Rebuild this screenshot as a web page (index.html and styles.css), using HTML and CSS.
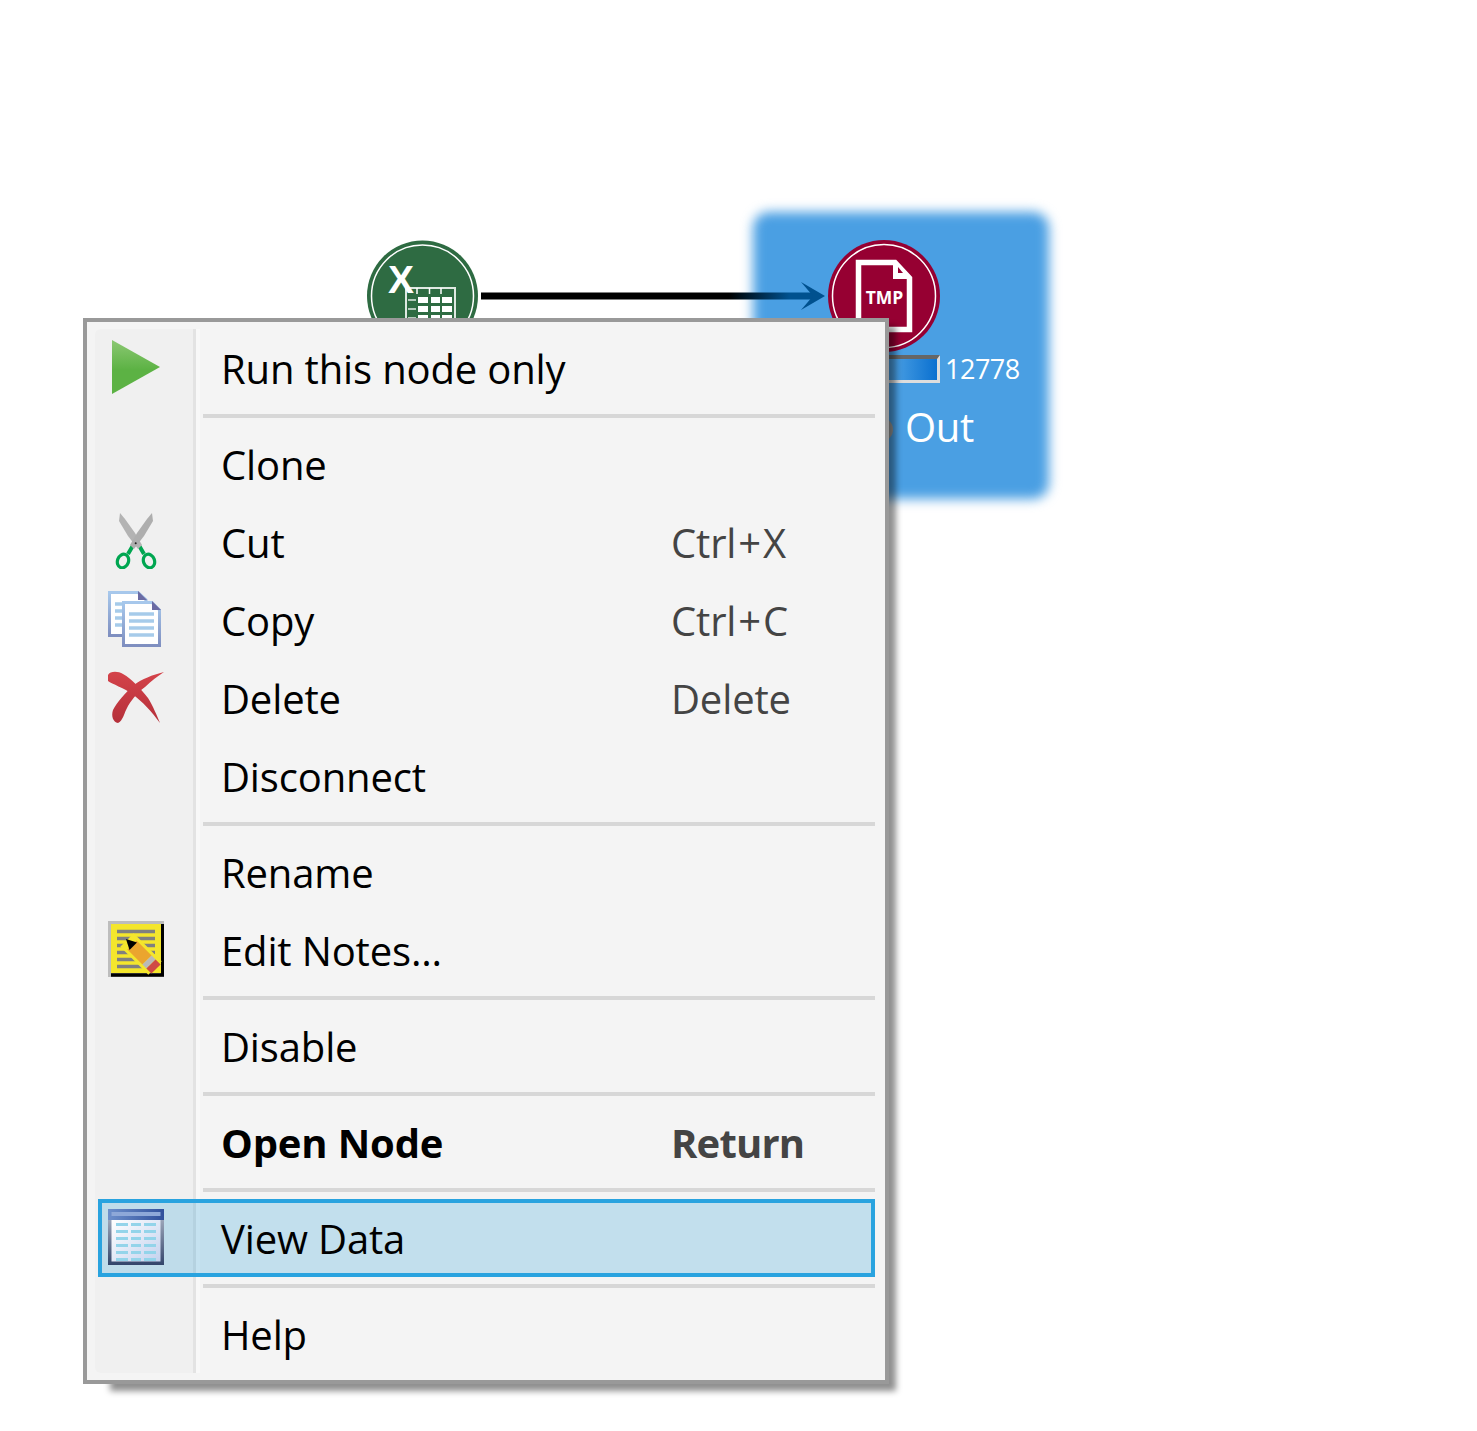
FILE: index.html
```html
<!DOCTYPE html>
<html lang="en">
<head>
<meta charset="utf-8">
<title>Node context menu</title>
<link rel="stylesheet" href="styles.css">
</head>
<body>
<main class="canvas">
  <div class="selection"></div>
  <svg class="arrow" width="350" height="40" viewBox="0 0 350 40">
    <defs>
      <linearGradient id="wire" x1="0" x2="1" y1="0" y2="0">
        <stop offset="0.74" stop-color="#000"/>
        <stop offset="0.92" stop-color="#00518f"/>
      </linearGradient>
    </defs>
    <rect x="1" y="12.500" width="335" height="7" fill="url(#wire)"/>
    <path d="M321 2 L345 16 L321 30 L333 16 Z" fill="#00518f"/>
  </svg>
  <svg class="node node-excel" width="114" height="114" viewBox="0 0 114 114">
    <circle cx="57.500" cy="57" r="55.500" fill="#2e6b42"/>
    <circle cx="57.500" cy="57" r="51" fill="none" stroke="#fff" stroke-width="1.500"/>
    <rect x="41" y="49" width="49" height="60" fill="#2e6b42" stroke="#dfe9e2" stroke-width="2"/>
    <path d="M53 58h10v6H53zM66 58h9v6h-9zM77 58h10v6H77zM53 67h10v6H53zM66 67h9v6h-9zM77 67h10v6H77zM53 76h10v6H53zM66 76h9v6h-9zM77 76h10v6H77z" fill="#fff"/>
    <path d="M43 61h8M43 70h8M43 79h8" stroke="#dfe9e2" stroke-width="1.500"/>
    <path d="M64.500 49v6M76 49v6M52 49v6" stroke="#fff" stroke-width="1.500"/>
    <text class="excel-x" x="23" y="54">X</text>
  </svg>
  <svg class="node node-tmp" width="114" height="114" viewBox="0 0 114 114">
    <circle cx="57" cy="57" r="56" fill="#960032"/>
    <circle cx="57" cy="57" r="51.500" fill="none" stroke="#fff" stroke-width="1.500"/>
    <path d="M31.500 23.500H68L82.500 39V90.500H31.500Z" fill="none" stroke="#fff" stroke-width="5.500"/>
    <path d="M66 21L85 40H66Z" fill="#fff"/>
    <path d="M71 28L76 34H71Z" fill="#960032"/>
    <text class="tmp-label" x="57.500" y="65" text-anchor="middle">TMP</text>
  </svg>
  <div class="progress"><div class="progress-fill"></div></div>
  <span class="count">12778</span>
  <span class="peek"></span>
  <span class="node-name">Out</span>

  <div class="menu-shadow"></div>
  <nav class="menu">
    <div class="row">
      <svg class="icon" viewBox="0 0 56 56">
        <defs><linearGradient id="play" x1="0" x2="0" y1="0" y2="1"><stop offset="0" stop-color="#8cc873"/><stop offset="0.55" stop-color="#5cb244"/></linearGradient></defs>
        <path d="M4 1L52 28L4 55Z" fill="url(#play)"/>
      </svg>
      <span class="label">Run this node only</span>
    </div>
    <div class="sep"></div>
    <div class="row"><span class="icon"></span><span class="label">Clone</span></div>
    <div class="row">
      <svg class="icon" viewBox="0 0 56 56">
        <path d="M27 29L20 41M29 29L36 41" stroke="#00a651" stroke-width="4" fill="none"/>
        <ellipse cx="15" cy="48" rx="5.500" ry="7" transform="rotate(20 15 48)" fill="none" stroke="#00a651" stroke-width="3.200"/>
        <ellipse cx="41" cy="48" rx="5.500" ry="7" transform="rotate(-20 41 48)" fill="none" stroke="#00a651" stroke-width="3.200"/>
        <path d="M12 0L17 6L27 20L34 32L30 36L20 23L11 8Z" fill="#b3b3b3"/>
        <path d="M44 0L39 6L29 20L22 32L26 36L36 23L45 8Z" fill="#aeaeae"/>
        <circle cx="27.700" cy="30.300" r="1" fill="#222"/>
      </svg>
      <span class="label">Cut</span><span class="shortcut">Ctrl<span class="plus">+</span>X</span>
    </div>
    <div class="row">
      <svg class="icon" viewBox="0 0 56 56">
        <defs><linearGradient id="page" x1="0" x2="0" y1="0" y2="1"><stop offset="0" stop-color="#a7c8ec"/><stop offset="1" stop-color="#7f8fc0"/></linearGradient></defs>
        <path d="M1.500 1.500H30L38 9V44.500H1.500Z" fill="#fff" stroke="url(#page)" stroke-width="3"/>
        <path d="M30 0L39 9H30Z" fill="#6b6ba3"/>
        <path d="M7 13H16M7 20H16M7 27H16M7 34H16" stroke="#a6cbea" stroke-width="3.500"/>
        <path d="M15.500 11.500H44L51.500 19V54.500H15.500Z" fill="#fff" stroke="url(#page)" stroke-width="3"/>
        <path d="M44 10L53 19H44Z" fill="#6b6ba3"/>
        <path d="M21 23H46M21 30H46M21 37H46M21 44H46" stroke="#a6cbea" stroke-width="3.500"/>
      </svg>
      <span class="label">Copy</span><span class="shortcut">Ctrl<span class="plus">+</span>C</span>
    </div>
    <div class="row">
      <svg class="icon" viewBox="0 0 56 56">
        <defs><linearGradient id="cross" x1="0" x2="0" y1="0" y2="1"><stop offset="0" stop-color="#d4434a"/><stop offset="1" stop-color="#b5303a"/></linearGradient></defs>
        <path d="M0 6C2 2 10 2 15 5C24 10 32 19 40 29C45 37 49 47 52 54C44 43 34 32 24 25C16 19 4 15 0 12Z" fill="url(#cross)"/>
        <path d="M56 3C44 6 34 10 26 16C18 23 9 33 5 41C3 47 5 53 10 54C15 52 16 44 20 37C25 29 31 22 37 18C43 12 50 7 56 3Z" fill="url(#cross)"/>
      </svg>
      <span class="label">Delete</span><span class="shortcut">Delete</span>
    </div>
    <div class="row"><span class="icon"></span><span class="label">Disconnect</span></div>
    <div class="sep"></div>
    <div class="row"><span class="icon"></span><span class="label">Rename</span></div>
    <div class="row">
      <svg class="icon" viewBox="0 0 56 56">
        <rect width="56" height="56" fill="#bdbdbd"/>
        <path d="M3 54H54.500V3" fill="none" stroke="#000" stroke-width="3.500"/>
        <rect x="3" y="3" width="50" height="49" fill="#f4e62c"/>
        <path d="M9 10.500H47M9 17.500H47M9 24.500H47M9 31.500H47M9 38.500H47M9 45.500H47" stroke="#808080" stroke-width="3.500"/>
        <path d="M19 19L47 47" stroke="#f4e62c" stroke-width="19"/>
        <path d="M24 24L39 39" stroke="#eba52e" stroke-width="13"/>
        <path d="M39 39L43 43" stroke="#b9b9b9" stroke-width="13"/>
        <path d="M43 43L48 48" stroke="#cf4a45" stroke-width="13"/>
        <path d="M18 18L29 21.500L21.500 29Z" fill="#000"/>
      </svg>
      <span class="label">Edit Notes...</span>
    </div>
    <div class="sep"></div>
    <div class="row"><span class="icon"></span><span class="label">Disable</span></div>
    <div class="sep"></div>
    <div class="row row-bold"><span class="icon"></span><span class="label">Open Node</span><span class="shortcut">Return</span></div>
    <div class="sep"></div>
    <div class="row row-active">
      <svg class="icon" viewBox="0 0 56 56">
        <defs>
          <linearGradient id="tframe" x1="0" x2="0" y1="0" y2="1"><stop offset="0" stop-color="#b4bccb"/><stop offset="1" stop-color="#33456b"/></linearGradient>
          <linearGradient id="thead" x1="0" x2="1" y1="0" y2="0"><stop offset="0" stop-color="#6d8fcb"/><stop offset="1" stop-color="#30509c"/></linearGradient>
          <linearGradient id="tbody" x1="0" x2="1" y1="0" y2="1"><stop offset="0" stop-color="#fff"/><stop offset="1" stop-color="#c4d2ee"/></linearGradient>
        </defs>
        <rect width="56" height="56" fill="url(#tframe)"/>
        <rect width="56" height="11" fill="url(#thead)"/>
        <rect x="3.500" y="3" width="49" height="4" fill="#8ea8d8"/>
        <rect x="3.500" y="11" width="49" height="41.500" fill="url(#tbody)"/>
        <path d="M8 15.500H20M23 15.500H33M36 15.500H48M8 22.500H20M23 22.500H33M36 22.500H48M8 29.500H20M23 29.500H33M36 29.500H48M8 36.500H20M23 36.500H33M36 36.500H48M8 43.500H20M23 43.500H33M36 43.500H48M8 50.500H20M23 50.500H33M36 50.500H48" stroke="#93d4ea" stroke-width="3"/>
      </svg>
      <span class="label">View Data</span>
    </div>
    <div class="sep"></div>
    <div class="row"><span class="icon"></span><span class="label">Help</span></div>
  </nav>
</main>
</body>
</html>
```
FILE: styles.css
```css
html, body {
  margin: 0;
  background: #fff;
}
.canvas {
  position: relative;
  width: 1477px;
  height: 1431px;
  overflow: hidden;
  font-family: "Open Sans", "Noto Sans", sans-serif;
}
.selection {
  position: absolute;
  left: 753px;
  top: 212px;
  width: 296px;
  height: 287px;
  border-radius: 16px;
  background: #4a9fe3;
  filter: blur(6px);
}
.arrow {
  position: absolute;
  left: 480px;
  top: 280px;
}
.node {
  position: absolute;
  top: 239px;
}
.node-excel { left: 365px; }
.node-tmp { left: 827px; }
.excel-x {
  font-family: "Liberation Sans", sans-serif;
  font-weight: 700;
  font-size: 39px;
  fill: #fff;
}
.tmp-label {
  font-family: "Open Sans", sans-serif;
  font-weight: 700;
  font-size: 17.500px;
  fill: #fff;
}
.progress {
  position: absolute;
  left: 800px;
  top: 355px;
  width: 140px;
  height: 28px;
  box-sizing: border-box;
  border: 3px solid #ddd;
  border-top: 4px solid #666;
  border-left: 0;
}
.progress-fill {
  height: 100%;
  background: linear-gradient(90deg, #4a9fe3 68%, #0a70d0 100%);
}
.count {
  position: absolute;
  left: 945px;
  top: 350px;
  font-size: 27px;
  line-height: 38px;
  letter-spacing: -0.5px;
  color: #fff;
}
.peek {
  position: absolute;
  left: 868px;
  top: 417px;
  width: 25px;
  height: 25px;
  border-radius: 50%;
  background: #9a9a9a;
}
.node-name {
  position: absolute;
  left: 905px;
  top: 399px;
  font-size: 40px;
  line-height: 56px;
  letter-spacing: -0.3px;
  color: #fff;
}
.menu-shadow {
  position: absolute;
  left: 110px;
  top: 326px;
  width: 786px;
  height: 1065px;
  background: rgba(0, 0, 0, 0.44);
  filter: blur(3px);
}
.menu {
  position: absolute;
  left: 83px;
  top: 318px;
  width: 806px;
  height: 1066px;
  box-sizing: border-box;
  padding: 7px 10px 7px 11px;
  border: 4px solid #999;
  background: #f4f4f4;
}
.menu::before {
  content: "";
  position: absolute;
  left: 8px;
  top: 7px;
  bottom: 7px;
  width: 98px;
  box-sizing: content-box;
  border-radius: 6px 0 0 6px;
  background: #f0f0f0;
  border-right: 3px solid #e3e3e3;
  box-shadow: 4px 0 0 #f8f8f8;
}
.row {
  position: relative;
  display: flex;
  height: 78px;
  box-sizing: border-box;
  border: 4px solid transparent;
  color: #000;
  font-size: 40px;
  letter-spacing: -0.15px;
}
.row-bold { font-weight: 700; }
.row-bold .shortcut { letter-spacing: -0.8px; }
.row-active {
  border-color: #29a3df;
  background: rgba(38, 160, 218, 0.24);
}
.icon {
  flex: none;
  display: block;
  width: 56px;
  height: 56px;
  margin: 6px 57px 0 6px;
}
.label {
  flex: none;
  width: 450px;
  line-height: 72px;
}
.shortcut {
  line-height: 72px;
  color: #444;
}
.plus {
  margin: 0 2px;
}
.sep {
  position: relative;
  height: 4px;
  margin: 7px 0 7px 105px;
  background: #d7d7d7;
}
```
